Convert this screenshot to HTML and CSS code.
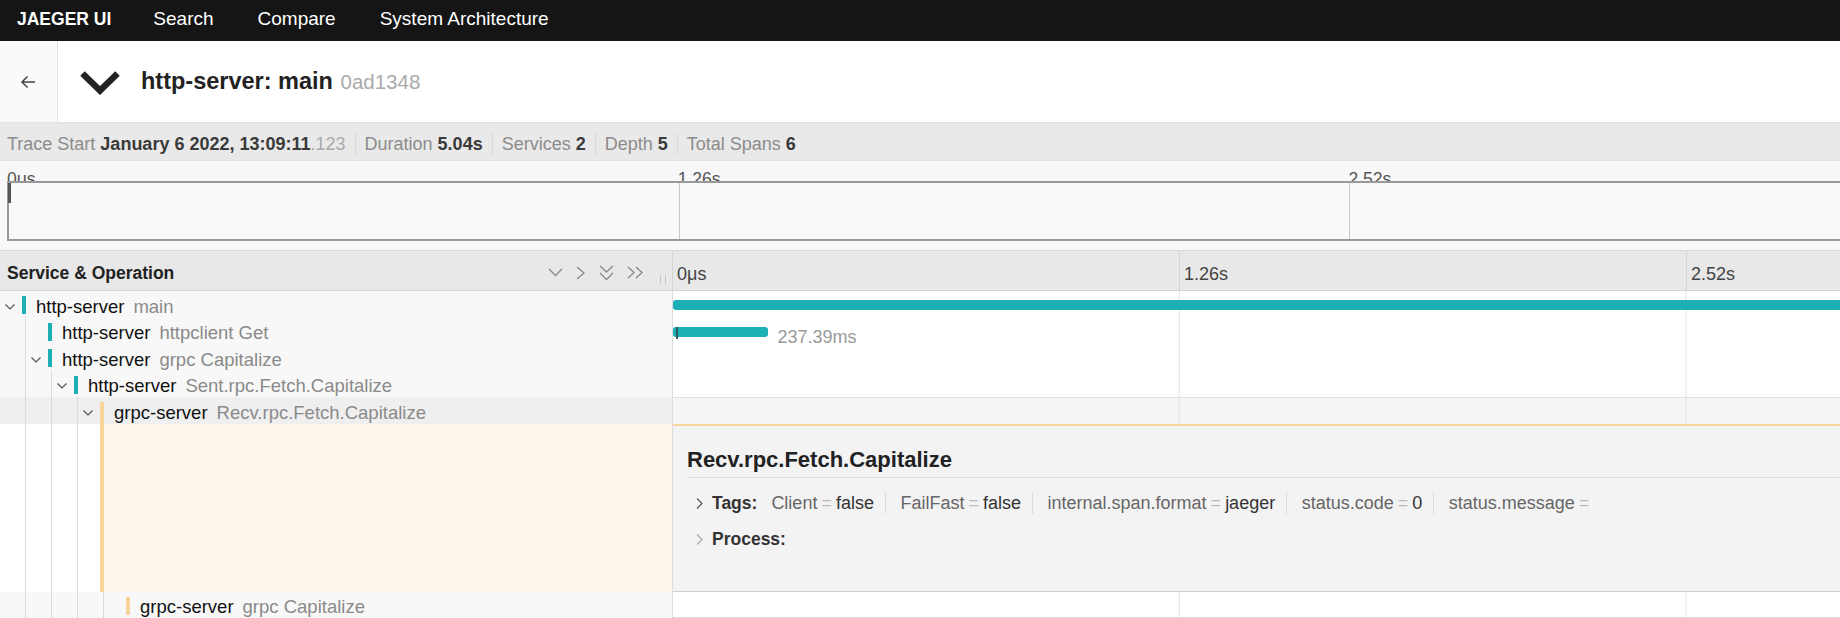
FILE: index.html
```html
<!DOCTYPE html>
<html lang="en">
<head>
  <meta charset="UTF-8">
  <title>http-server: main - Jaeger UI</title>
  <link rel="stylesheet" href="styles.css">
</head>
<body>
  <nav class="topnav">
    <a class="brand" href="#">JAEGER UI</a>
    <a href="#">Search</a>
    <a href="#">Compare</a>
    <a href="#">System Architecture</a>
  </nav>

  <main class="trace-page">
    <header class="trace-header">
      <a class="back-btn" href="#" title="Back">
        <svg width="16" height="14" viewBox="0 0 16 14"><path d="M15 7H2M7.5 1.5L2 7l5.5 5.5" fill="none" stroke="#444" stroke-width="1.5"/></svg>
      </a>
      <div class="trace-title">
        <svg class="collapse-icon" width="40" height="25" viewBox="0 0 40 25"><polyline points="2.5,3.5 20,20.5 37.5,3.5" fill="none" stroke="#222" stroke-width="6.5"/></svg>
        <h1>http-server: main <small>0ad1348</small></h1>
      </div>
    </header>

    <div class="trace-meta">
      <span class="meta-item">Trace Start <b>January 6 2022, 13:09:11</b><em>.123</em></span>
      <span class="meta-item">Duration <b>5.04s</b></span>
      <span class="meta-item">Services <b>2</b></span>
      <span class="meta-item">Depth <b>5</b></span>
      <span class="meta-item">Total Spans <b>6</b></span>
    </div>

    <section class="minimap">
      <div class="mm-labels">
        <span>0μs</span><span>1.26s</span><span>2.52s</span><span>3.78s</span>
      </div>
      <div class="mm-box">
        <div class="mm-col"><i class="mm-span"></i></div>
        <div class="mm-col"></div>
        <div class="mm-col"></div>
        <div class="mm-col"></div>
      </div>
    </section>

    <section class="timeline">
      <div class="tl-row tl-header">
        <div class="name-cell">
          <span class="col-title">Service &amp; Operation</span>
          <div class="tree-tools">
            <svg width="15" height="9" viewBox="0 0 15 9"><polyline points="1,1 7.5,7.5 14,1"/></svg>
            <svg width="10" height="14" viewBox="0 0 10 14"><polyline points="1,1 8,7 1,13"/></svg>
            <svg width="15" height="16" viewBox="0 0 15 16"><polyline points="1,1 7.5,7 14,1"/><polyline points="1,8 7.5,14.5 14,8"/></svg>
            <svg width="17" height="13" viewBox="0 0 17 13"><polyline points="1,1 7,6.5 1,12"/><polyline points="9,1 15,6.5 9,12"/></svg>
          </div>
          <span class="resizer"></span>
        </div>
        <div class="time-cell ticks">
          <span>0μs</span><span>1.26s</span><span>2.52s</span><span>3.78s</span>
        </div>
      </div>

      <div class="tl-row">
        <div class="name-cell">
          <span class="node">
            <svg class="toggle" width="10" height="6" viewBox="0 0 10 6"><polyline points="0.5,0.5 5,5 9.5,0.5"/></svg>
            <i class="svc-bar teal"></i>
          </span>
          <span class="svc">http-server</span><span class="op">main</span>
        </div>
        <div class="time-cell">
          <div class="span-bar teal" style="width: 100%"></div>
        </div>
      </div>

      <div class="tl-row">
        <div class="name-cell">
          <span class="guide"></span>
          <span class="node"><i class="svc-bar teal"></i></span>
          <span class="svc">http-server</span><span class="op">httpclient Get</span>
        </div>
        <div class="time-cell">
          <div class="span-bar teal" style="width: 4.71%"><i class="log-mark"></i></div>
          <span class="span-label">237.39ms</span>
        </div>
      </div>

      <div class="tl-row">
        <div class="name-cell">
          <span class="guide"></span>
          <span class="node">
            <svg class="toggle" width="10" height="6" viewBox="0 0 10 6"><polyline points="0.5,0.5 5,5 9.5,0.5"/></svg>
            <i class="svc-bar teal"></i>
          </span>
          <span class="svc">http-server</span><span class="op">grpc Capitalize</span>
        </div>
        <div class="time-cell"></div>
      </div>

      <div class="tl-row">
        <div class="name-cell">
          <span class="guide"></span><span class="guide"></span>
          <span class="node">
            <svg class="toggle" width="10" height="6" viewBox="0 0 10 6"><polyline points="0.5,0.5 5,5 9.5,0.5"/></svg>
            <i class="svc-bar teal"></i>
          </span>
          <span class="svc">http-server</span><span class="op">Sent.rpc.Fetch.Capitalize</span>
        </div>
        <div class="time-cell"></div>
      </div>

      <div class="tl-row is-open">
        <div class="name-cell">
          <span class="guide"></span><span class="guide"></span><span class="guide"></span>
          <span class="node">
            <svg class="toggle" width="10" height="6" viewBox="0 0 10 6"><polyline points="0.5,0.5 5,5 9.5,0.5"/></svg>
            <i class="svc-bar orange"></i>
          </span>
          <span class="svc">grpc-server</span><span class="op">Recv.rpc.Fetch.Capitalize</span>
        </div>
        <div class="time-cell"></div>
      </div>

      <div class="tl-row detail-row">
        <div class="name-cell">
          <span class="guide"></span><span class="guide"></span><span class="guide"></span>
          <span class="node-line"></span>
          <span class="detail-fill"></span>
        </div>
        <div class="detail-panel">
          <h2>Recv.rpc.Fetch.Capitalize</h2>
          <div class="kv-section">
            <svg class="kv-toggle" width="7" height="11" viewBox="0 0 7 11"><polyline points="1,0.5 6,5.5 1,10.5"/></svg>
            <strong>Tags:</strong>
            <ul class="tags">
              <li>Client<i>=</i><span>false</span></li>
              <li>FailFast<i>=</i><span>false</span></li>
              <li>internal.span.format<i>=</i><span>jaeger</span></li>
              <li>status.code<i>=</i><span>0</span></li>
              <li>status.message<i>=</i><span></span></li>
            </ul>
          </div>
          <div class="kv-section">
            <svg class="kv-toggle light" width="7" height="11" viewBox="0 0 7 11"><polyline points="1,0.5 6,5.5 1,10.5"/></svg>
            <strong>Process:</strong>
          </div>
        </div>
      </div>

      <div class="tl-row last">
        <div class="name-cell">
          <span class="guide"></span><span class="guide"></span><span class="guide"></span><span class="guide"></span>
          <span class="node"><i class="svc-bar orange"></i></span>
          <span class="svc">grpc-server</span><span class="op">grpc Capitalize</span>
        </div>
        <div class="time-cell"></div>
      </div>
    </section>
  </main>
</body>
</html>
```

FILE: styles.css
```css
* {
  box-sizing: border-box;
}

html, body {
  overflow: hidden;
}

body {
  margin: 0;
  width: 2700px;
  background: #fff;
  color: #333;
  font-family: 'Liberation Sans', Arial, Helvetica, sans-serif;
  font-size: 18px;
}

/* top navigation */
.topnav {
  height: 41px;
  background: #151515;
  display: flex;
  align-items: center;
  gap: 44px;
  padding: 0 0 3px 17px;
}

.topnav a {
  color: #fff;
  text-decoration: none;
  font-size: 19px;
}

.topnav .brand {
  font-size: 17.5px;
  font-weight: bold;
  margin-right: -2px;
}

/* trace title */
.trace-header {
  display: flex;
  height: 81px;
}

.back-btn {
  width: 58px;
  background: #fafafa;
  border-right: 1px solid #e4e4e4;
  display: flex;
  align-items: center;
  justify-content: center;
  padding-right: 2px;
}

.trace-title {
  display: flex;
  align-items: center;
  padding-left: 22px;
}

.collapse-icon {
  margin-right: 21px;
  margin-top: 2px;
}

.trace-title h1 {
  margin: 0;
  font-size: 23.5px;
  font-weight: bold;
  color: #222;
}

.trace-title h1 small {
  font-size: 20.5px;
  font-weight: normal;
  color: #aaa;
  margin-left: 1px;
}

/* summary line */
.trace-meta {
  height: 39px;
  background: #e9e9e9;
  border-top: 1px solid #e0e0e0;
  border-bottom: 1px solid #e4e4e4;
  display: flex;
  align-items: center;
  padding: 5px 0 0 7px;
  color: #8c8c8c;
}

.meta-item {
  line-height: 22px;
  padding: 0 9px;
}

.meta-item:first-child {
  padding-left: 0;
}

.meta-item + .meta-item {
  border-left: 1px solid #d9d9d9;
}

.meta-item b {
  color: #3a3a3a;
}

.meta-item em {
  font-style: normal;
  color: #aaa;
}

/* minimap */
.minimap {
  background: #f8f8f8;
  padding: 0 10px 9px 7px;
  border-bottom: 1px solid #dcdcdc;
}

.mm-labels {
  display: flex;
  height: 20px;
  overflow: hidden;
}

.mm-labels span {
  flex: 1;
  padding-top: 10px;
  line-height: 17px;
  font-size: 17.5px;
  color: #555;
}

.mm-box {
  display: flex;
  height: 60px;
  background: #f9f9f9;
  border: 2px solid #999;
  border-right: none;
  position: relative;
}

.mm-col {
  flex: 1;
}

.mm-col + .mm-col {
  border-left: 1px solid #c8c8c8;
}

.mm-span {
  position: absolute;
  left: -1px;
  top: 0;
  width: 3px;
  height: 20px;
  background: #555;
}

/* span tree + timeline */
.tl-row {
  display: flex;
  height: 26.5px;
}

.name-cell {
  width: 673px;
  flex: none;
  display: flex;
  align-items: center;
  background: #f8f8f8;
  border-right: 1px solid #dcdcdc;
  white-space: nowrap;
}

.time-cell {
  flex: 1;
  position: relative;
  display: flex;
  align-items: flex-start;
  background: linear-gradient(90deg, transparent calc(100% - 1px), #e3e3e3 0) 0 0 / 25% 100% repeat-x;
}

.tl-header {
  height: 40px;
  background: #e8e8e8;
  border-bottom: 1px solid #d4d4d4;
}

.tl-header .name-cell {
  background: transparent;
  padding: 0 6px 0 7px;
  border-right-color: #d4d4d4;
}

.col-title {
  font-size: 17.5px;
  font-weight: bold;
  color: #222;
  margin-top: 6px;
}

.tree-tools {
  margin-left: auto;
  display: flex;
  align-items: center;
  gap: 13px;
  margin-top: 4px;
}

.tree-tools svg polyline {
  fill: none;
  stroke: #888;
  stroke-width: 1.3;
}

.resizer {
  width: 6px;
  height: 9px;
  margin: 17px 0 0 16px;
  border-left: 1px solid #c4c4c4;
  border-right: 1px solid #c4c4c4;
}

.ticks {
  align-items: center;
  background: none;
}

.ticks span {
  flex: 1;
  height: 100%;
  display: flex;
  align-items: center;
  padding: 7px 0 0 4px;
  color: #444;
}

.ticks span + span {
  border-left: 1px solid #d4d4d4;
}

.guide {
  width: 26px;
  height: 100%;
  flex: none;
  border-right: 1px solid #dadada;
}

.node {
  width: 26px;
  height: 100%;
  flex: none;
  display: flex;
  align-items: center;
}

.toggle {
  margin-left: 4.5px;
  margin-top: 5px;
}

.toggle polyline,
.kv-toggle polyline {
  fill: none;
  stroke: #555;
  stroke-width: 1.2;
}

.svc-bar {
  width: 4px;
  height: 18px;
  margin-left: auto;
  margin-top: 2px;
}

.teal {
  background: #1cafb5;
}

.orange {
  background: #f8d49b;
}

.svc {
  margin: 5px 0 0 10px;
  font-size: 18.5px;
  color: #111;
}

.op {
  margin: 5px 0 0 9px;
  font-size: 18.5px;
  color: #8a8a8a;
}

.span-bar {
  position: relative;
  height: 10px;
  margin-top: 9px;
  border-radius: 3px;
}

.log-mark {
  position: absolute;
  left: 3px;
  top: 0;
  width: 1.5px;
  height: 12px;
  background: #2e5b5e;
}

.span-label {
  margin: 8px 0 0 9px;
  line-height: 22px;
  font-size: 18px;
  color: #999;
}

/* expanded row */
.is-open .name-cell {
  background: #efefef;
}

.is-open .time-cell {
  background-color: #f5f5f5;
  border-top: 1px solid #e0e0e0;
}

.is-open .svc-bar {
  align-self: flex-end;
  height: 22px;
}

.detail-row {
  height: 168px;
}

.detail-row .name-cell {
  background: #fff;
  align-items: stretch;
}

.node-line {
  width: 26px;
  flex: none;
  border-right: 4px solid #f8d49b;
}

.detail-fill {
  flex: 1;
  background: #fef6eb;
}

.detail-panel {
  flex: 1;
  background: #f3f3f3;
  border-top: 2px solid #f9d69d;
  border-bottom: 1px solid #d0d0d0;
  padding: 20.5px 15px 0 14px;
}

.detail-panel h2 {
  margin: 0;
  font-size: 22px;
  line-height: 28px;
  color: #222;
  padding-bottom: 3px;
  border-bottom: 1px solid #dcdcdc;
}

.kv-section {
  display: flex;
  align-items: center;
  height: 28px;
  margin-top: 8px;
  padding-left: 9px;
}

.kv-section:first-of-type {
  margin-top: 11px;
}

.kv-toggle.light polyline {
  stroke: #aaa;
}

.kv-section strong {
  margin-left: 9px;
  font-size: 17.5px;
  color: #333;
}

.tags {
  display: flex;
  margin: 0 0 0 14px;
  padding: 0;
  list-style: none;
  color: #666;
}

.tags li {
  line-height: 22px;
  padding-right: 11px;
}

.tags li + li {
  border-left: 1px solid #dcdcdc;
  padding-left: 14.5px;
}

.tags i {
  font-style: normal;
  color: #bbb;
  margin: 0 4px;
}

.tags span {
  color: #333;
}

.last .time-cell {
  background-color: #fff;
  border-bottom: 1px solid #dcdcdc;
}
```
